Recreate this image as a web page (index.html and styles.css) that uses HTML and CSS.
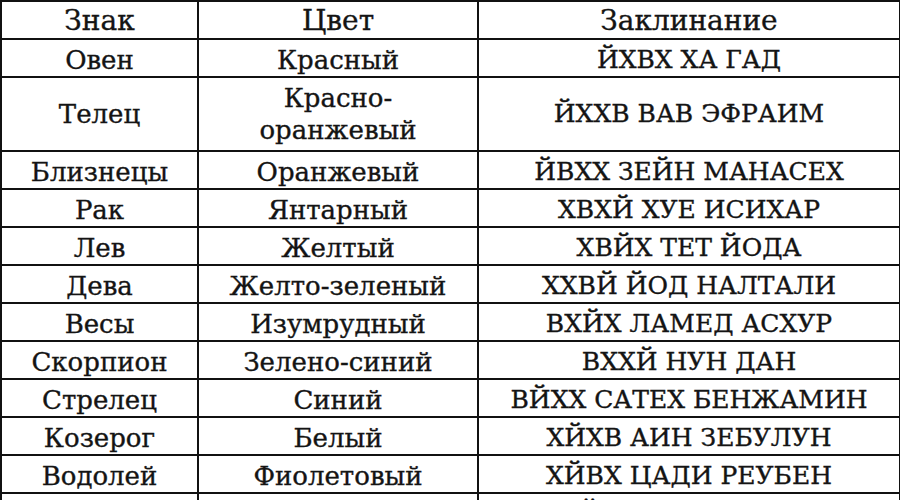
FILE: index.html
```html
<!DOCTYPE html>
<html lang="ru">
<head>
<meta charset="utf-8">
<title>Знаки и цвета</title>
<link rel="stylesheet" href="styles.css">
</head>
<body>
<table class="signs">
  <colgroup>
    <col class="c1">
    <col class="c2">
    <col class="c3">
  </colgroup>
  <thead>
    <tr class="head"><th>Знак</th><th>Цвет</th><th>Заклинание</th></tr>
  </thead>
  <tbody>
    <tr><td>Овен</td><td>Красный</td><td class="spell">ЙХВХ ХА ГАД</td></tr>
    <tr class="tall"><td>Телец</td><td>Красно-<br>оранжевый</td><td class="spell">ЙХХВ ВАВ ЭФРАИМ</td></tr>
    <tr><td>Близнецы</td><td>Оранжевый</td><td class="spell">ЙВХХ ЗЕЙН МАНАСЕХ</td></tr>
    <tr><td>Рак</td><td>Янтарный</td><td class="spell">ХВХЙ ХУЕ ИСИХАР</td></tr>
    <tr><td>Лев</td><td>Желтый</td><td class="spell">ХВЙХ ТЕТ ЙОДА</td></tr>
    <tr><td>Дева</td><td>Желто-зеленый</td><td class="spell">ХХВЙ ЙОД НАЛТАЛИ</td></tr>
    <tr><td>Весы</td><td>Изумрудный</td><td class="spell">ВХЙХ ЛАМЕД АСХУР</td></tr>
    <tr><td>Скорпион</td><td>Зелено-синий</td><td class="spell">ВХХЙ НУН ДАН</td></tr>
    <tr><td>Стрелец</td><td>Синий</td><td class="spell">ВЙХХ САТЕХ БЕНЖАМИН</td></tr>
    <tr><td>Козерог</td><td>Белый</td><td class="spell">ХЙХВ АИН ЗЕБУЛУН</td></tr>
    <tr><td>Водолей</td><td>Фиолетовый</td><td class="spell">ХЙВХ ЦАДИ РЕУБЕН</td></tr>
    <tr><td>Рыбы</td><td>Ультрафиолетовый</td><td class="spell">ХХЙВ КОФ НАФТАЛИ</td></tr>
  </tbody>
</table>
</body>
</html>
```

FILE: styles.css
```css
html, body {
  margin: 0;
  padding: 0;
  background: #ffffff;
}

body {
  font-family: "DejaVu Serif", "Liberation Serif", serif;
  color: #141414;
  overflow: hidden;
}

.signs {
  border-collapse: collapse;
  table-layout: fixed;
  width: 899px;
  font-size: 26px;
  line-height: 32px;
}

.c1 { width: 197px; }
.c2 { width: 280px; }
.c3 { width: 422px; }

.signs td,
.signs th {
  border: 2px solid #111111;
  text-align: center;
  vertical-align: middle;
  padding: 4px 0 0 0;
  white-space: nowrap;
  font-weight: normal;
  -webkit-text-stroke: 0.35px #141414;
}

.signs th {
  font-size: 28px;
  padding: 3px 0 1px 0;
}

.signs td.spell {
  font-size: 25px;
}

.signs .tall td {
  padding: 4px 0 4px 0;
}
```
